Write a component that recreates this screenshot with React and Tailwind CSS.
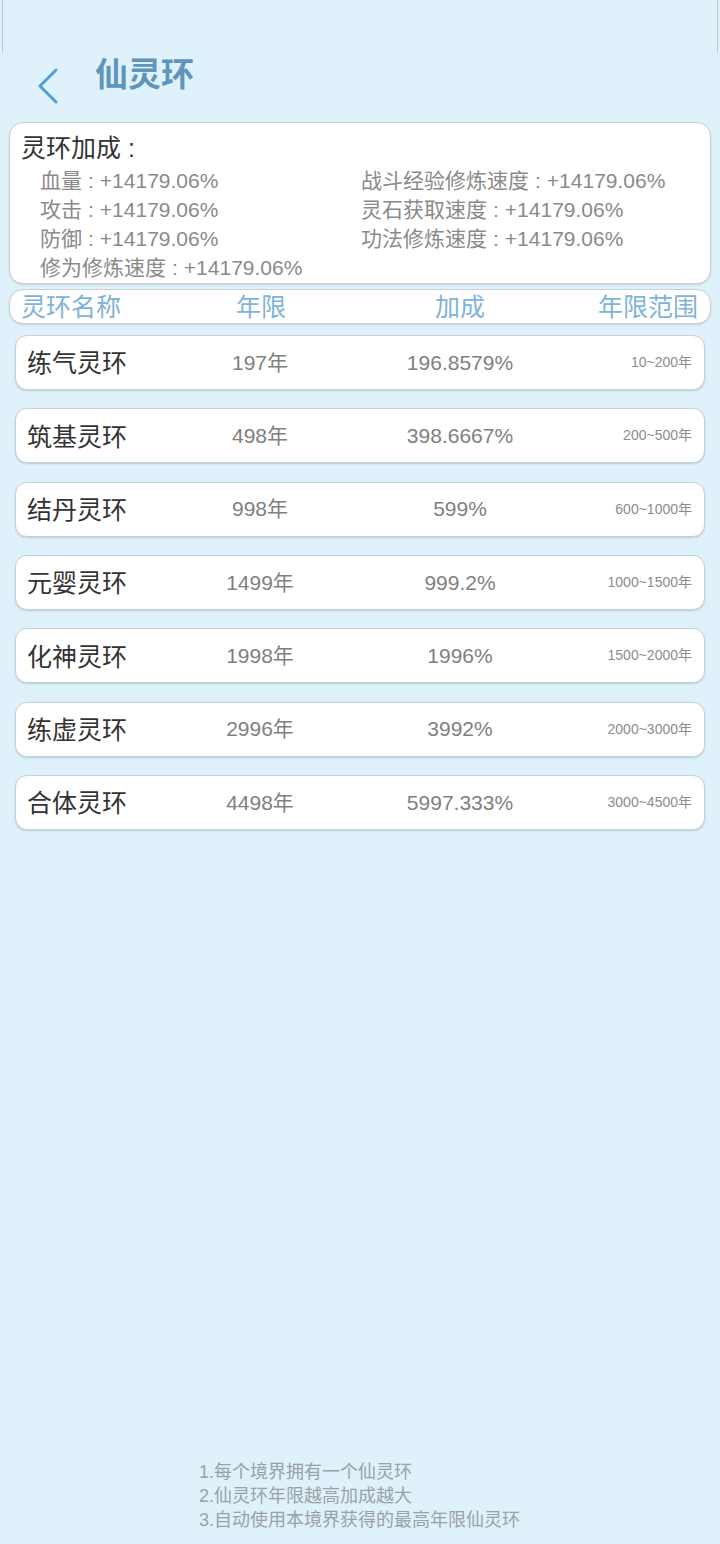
import React from 'react';

const stats = [
  ['血量', '战斗经验修炼速度'],
  ['攻击', '灵石获取速度'],
  ['防御', '功法修炼速度'],
  ['修为修炼速度', null],
];

const rings = [
  { name: '练气灵环', years: '197年', bonus: '196.8579%', range: '10~200年' },
  { name: '筑基灵环', years: '498年', bonus: '398.6667%', range: '200~500年' },
  { name: '结丹灵环', years: '998年', bonus: '599%', range: '600~1000年' },
  { name: '元婴灵环', years: '1499年', bonus: '999.2%', range: '1000~1500年' },
  { name: '化神灵环', years: '1998年', bonus: '1996%', range: '1500~2000年' },
  { name: '练虚灵环', years: '2996年', bonus: '3992%', range: '2000~3000年' },
  { name: '合体灵环', years: '4498年', bonus: '5997.333%', range: '3000~4500年' },
];

const VALUE = '+14179.06%';

// label : value, with the wide colon spacing of the original
const Stat = ({ label }) => (
  <span className="whitespace-nowrap">
    {label}
    <span className="mx-[6px]">:</span>
    {VALUE}
  </span>
);

export default function App() {
  return (
    <div
      className="min-h-[1544px] bg-[#dff1fa] flex flex-col"
      style={{ fontFamily: '"Liberation Sans", "Noto Sans CJK SC", sans-serif' }}
    >
      {/* status bar strip */}
      <div className="h-[52px] mx-[2px] border-l border-r border-[#b9c6cc]" />

      {/* Header */}
      <div className="h-[70px] flex items-start">
        <svg className="ml-[36px] mt-[16px]" width="24" height="36" viewBox="0 0 24 36" fill="none">
          <path d="M20 2 L4 18 L20 34" stroke="#4ea1d6" strokeWidth="3" strokeLinecap="round" strokeLinejoin="round" />
        </svg>
        <h1 className="ml-[35px] mt-[3px] text-[33px] leading-[40px] font-bold text-[#5f95ba]">仙灵环</h1>
      </div>

      {/* Bonus summary */}
      <div className="mx-[9px] h-[162px] bg-white rounded-[14px] border border-[#c6d1d7] shadow-[0_1px_2px_rgba(0,0,0,0.12)] pl-[11px] pt-[9px]">
        <div className="text-[25px] leading-[33px] text-[#333]">灵环加成 :</div>
        <div className="pl-[19px] mt-[1px]">
          {stats.map(([left, right]) => (
            <div key={left} className="flex h-[29px] items-center text-[21px] text-[#8a8a8a]">
              <div className="w-[321px]"><Stat label={left} /></div>
              {right && <Stat label={right} />}
            </div>
          ))}
        </div>
      </div>

      {/* Table header */}
      <div className="mx-[9px] mt-[5px] h-[35px] bg-white rounded-[14px] border border-[#c6d1d7] shadow-[0_1px_2px_rgba(0,0,0,0.12)] flex items-center pt-[2px] text-[25px] text-[#80b3d8]">
        <div className="w-[190px] pl-[11px]">灵环名称</div>
        <div className="w-[122px] text-center">年限</div>
        <div className="w-[276px] text-center">加成</div>
        <div className="flex-1 text-right pr-[12px]">年限范围</div>
      </div>

      {/* Ring rows */}
      <div className="mx-[15px] mt-[11px] flex flex-col gap-[18.35px]">
        {rings.map((r) => (
          <div
            key={r.name}
            className="h-[55px] bg-white rounded-[12px] border border-[#c6d1d7] shadow-[0_1px_2px_rgba(0,0,0,0.15)] flex items-center"
          >
            <div className="w-[184px] pl-[11px] pt-[3px] text-[25px] text-[#333]">{r.name}</div>
            <div className="w-[120px] text-center text-[21px] text-[#808080]">{r.years}</div>
            <div className="w-[280px] text-center text-[21px] text-[#808080]">{r.bonus}</div>
            <div className="flex-1 text-right pr-[12px] text-[14px] text-[#8c8c8c]">{r.range}</div>
          </div>
        ))}
      </div>

      <div className="flex-1" />

      {/* Notes */}
      <div className="pl-[199px] pb-[12px] text-[18px] leading-[24px] text-[#9aa2a7]">
        <div>1.每个境界拥有一个仙灵环</div>
        <div>2.仙灵环年限越高加成越大</div>
        <div>3.自动使用本境界获得的最高年限仙灵环</div>
      </div>
    </div>
  );
}
